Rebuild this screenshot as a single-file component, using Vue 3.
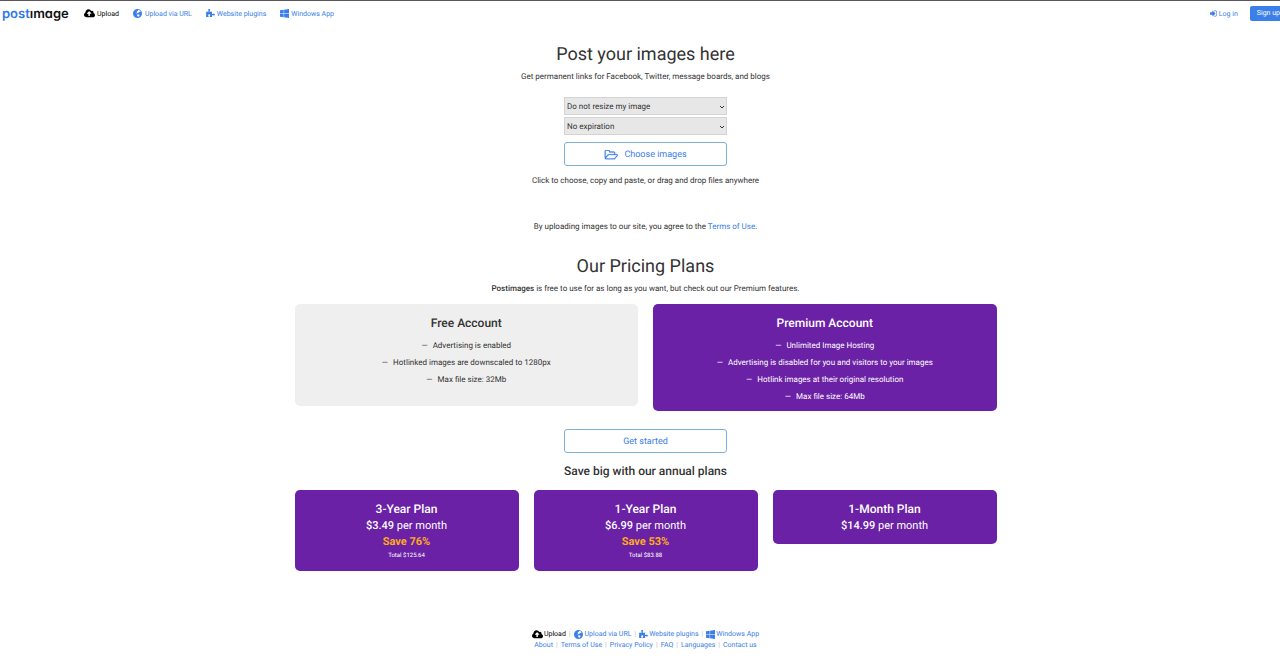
<script setup>
import { ref, h } from 'vue'

const resize = ref('Do not resize my image')
const expiration = ref('No expiration')

const icons = {
  upload: {
    box: '0 256 1920 1344',
    d: 'M1280 928q0-14-9-23l-352-352q-9-9-23-9t-23 9l-351 351q-10 12-10 24 0 14 9 23t23 9h224v352q0 13 9.5 22.5t22.5 9.5h192q13 0 22.5-9.5t9.5-22.5v-352h224q13 0 22.5-9.5t9.5-22.5zm640 288q0 159-112.5 271.5t-271.5 112.5h-1088q-185 0-316.5-131.5t-131.5-316.5q0-130 70-240t188-165q-2-30-2-43 0-212 150-362t362-150q156 0 285.5 87t188.5 231q71-62 166-62 106 0 181 75t75 181q0 76-41 138 130 31 213.5 135.5t83.5 238.5z',
  },
  globe: {
    box: '0 0 18 18',
    d: 'M9 0a9 9 0 1 0 0 18A9 9 0 0 0 9 0zM10 1.500L14 3 15.500 5 13 5.500 12 7 9.500 7.500 8 9 6.500 8.500 8 6.500 7.500 5 9.500 4zM9 10.500L12 11 13.500 12.500 11.500 14.500 10 16 9 14 8 12.500z',
  },
  plugin: {
    box: '64 0 1728 1728',
    d: 'M1755 1082q0 81-44.5 135t-123.5 54q-41 0-77.5-17.5t-59-38-56.5-38-71-17.5q-110 0-110 124 0 39 16 115t15 115v5q-22 0-33 1-34 3-97.5 11.5t-115.5 13.5-98 5q-61 0-103-26.5t-42-83.5q0-37 17.5-71t38-56.5 38-59 17.5-77.500q0-79-54-123.500t-135-44.500q-84 0-143 45.500t-59 127.500q0 43 15 83t33.500 64.500 33.500 53 15 50.500q0 45-46 89-37 35-117 35-95 0-245-24-9-2-27.500-4t-27.500-4l-13-2q-1 0-3-1-2 0-2-1v-1024q2 1 17.500 3.500t34 5 21.500 3.500q150 24 245 24 80 0 117-35 46-44 46-89 0-22-15-50.500t-33.500-53-33.500-64.500-15-83q0-82 59-127.500t144-45.500q80 0 134 44.500t54 123.500q0 41-17.500 77.500t-38 59-38 56.500-17.500 71q0 57 42 83.500t103 26.500q64 0 180-15t163-17v2q-1 2-3.500 17.500t-5 34-3.500 21.500q-24 150-24 245 0 80 35 117 44 46 89 46 22 0 50.500-15t53-33.500 64.500-33.500 83-15q82 0 127.500 59t45.500 143z',
  },
  windows: {
    box: '64 128 1664 1664',
    d: 'M746 1006v651l-682-94v-557zm0-743v659h-682v-565zm982 743v786l-907-125v-661zm0-878v794h-907v-669z',
  },
  login: {
    box: '0 256 1536 1280',
    d: 'M1184 896q0 26-19 45l-544 544q-19 19-45 19t-45-19-19-45v-288H64q-26 0-45-19t-19-45V704q0-26 19-45t45-19h448V352q0-26 19-45t45-19 45 19l544 544q19 19 19 45zM1536 544v704q0 119-84.500 203.500T1248 1536H928q-32 0-32-32v-64q0-32 32-32h320q66 0 113-47t47-113V544q0-66-47-113t-113-47H928q-32 0-32-32v-64q0-32 32-32h320q119 0 203.500 84.500T1536 544z',
  },
  folder: {
    box: '-40 216 2053 1360',
    d: 'M1845 931q0-35-53-35h-1088q-40 0-85.500 21.500t-71.500 52.500l-294 363q-18 24-18 40 0 35 53 35h1088q40 0 86-22t71-53l294-363q18-22 18-39zm-1141-163h768v-160q0-40-28-68t-68-28h-576q-40 0-68-28t-28-68v-64q0-40-28-68t-68-28h-320q-40 0-68 28t-28 68v853l256-315q44-53 116-87.500t140-34.500zm1269 163q0 62-46 120l-295 363q-43 53-116 87.500t-140 34.500h-1088q-92 0-158-66t-66-158v-960q0-92 66-158t158-66h320q92 0 158 66t66 158v32h544q92 0 158 66t66 158v160h192q54 0 99 24.500t67 70.500q15 32 15 68z',
  },
}

const Icon = (props) =>
  h('svg', { viewBox: icons[props.name].box, 'aria-hidden': 'true' }, [
    h('path', { d: icons[props.name].d, fill: 'currentColor', 'fill-rule': 'evenodd' }),
  ])
Icon.props = ['name']

const links = [
  { icon: 'upload', text: 'Upload', active: true },
  { icon: 'globe', text: 'Upload via URL' },
  { icon: 'plugin', text: 'Website plugins' },
  { icon: 'windows', text: 'Windows App' },
]
const more = ['About', 'Terms of Use', 'Privacy Policy', 'FAQ', 'Languages', 'Contact us']

const accounts = [
  {
    title: 'Free Account',
    items: ['Advertising is enabled', 'Hotlinked images are downscaled to 1280px', 'Max file size: 32Mb'],
  },
  {
    title: 'Premium Account',
    premium: true,
    items: [
      'Unlimited Image Hosting',
      'Advertising is disabled for you and visitors to your images',
      'Hotlink images at their original resolution',
      'Max file size: 64Mb',
    ],
  },
]

const plans = [
  { title: '3-Year Plan', price: '$3.49', save: 'Save 76%', total: 'Total $125.64' },
  { title: '1-Year Plan', price: '$6.99', save: 'Save 53%', total: 'Total $83.88' },
  { title: '1-Month Plan', price: '$14.99' },
]
</script>

<template>
  <div class="viewport">
    <div class="page">
      <header class="bar">
        <a class="logo" href="#" aria-label="postimage"><span>post</span>ımage</a>
        <nav class="nav">
          <a v-for="l in links" :key="l.text" href="#" class="nav-link" :class="{ active: l.active }">
            <Icon :name="l.icon" class="icon" :class="l.icon" />{{ l.text }}
          </a>
        </nav>
        <a href="#" class="nav-link login"><Icon name="login" class="icon small" />Log in</a>
        <a href="#" class="signup">Sign up</a>
      </header>

      <main class="main">
        <h1>Post your images here</h1>
        <p>Get permanent links for Facebook, Twitter, message boards, and blogs</p>

        <form class="form" @submit.prevent>
          <div class="select">
            <select v-model="resize" aria-label="Resize">
              <option>Do not resize my image</option>
            </select>
            <svg viewBox="0 0 6 4" aria-hidden="true"><path d="M1 1l2 2 2-2" /></svg>
          </div>
          <div class="select">
            <select v-model="expiration" aria-label="Expiration">
              <option>No expiration</option>
            </select>
            <svg viewBox="0 0 6 4" aria-hidden="true"><path d="M1 1l2 2 2-2" /></svg>
          </div>
          <button type="button" class="btn choose"><Icon name="folder" class="folder" />Choose images</button>
        </form>

        <p class="hint">Click to choose, copy and paste, or drag and drop files anywhere</p>
        <p class="terms">By uploading images to our site, you agree to the <a href="#">Terms of Use</a>.</p>

        <h2>Our Pricing Plans</h2>
        <p><strong>Postimages</strong> is free to use for as long as you want, but check out our Premium features.</p>

        <div class="accounts">
          <section v-for="a in accounts" :key="a.title" class="card account" :class="{ premium: a.premium }">
            <h3>{{ a.title }}</h3>
            <ul>
              <li v-for="i in a.items" :key="i">{{ i }}</li>
            </ul>
          </section>
        </div>

        <button type="button" class="btn">Get started</button>

        <h3 class="save-big">Save big with our annual plans</h3>
        <div class="plans">
          <section v-for="p in plans" :key="p.title" class="card premium">
            <h3>{{ p.title }}</h3>
            <div class="price"><strong>{{ p.price }}</strong> per month</div>
            <div v-if="p.save" class="save">{{ p.save }}</div>
            <div v-if="p.total" class="total">{{ p.total }}</div>
          </section>
        </div>
      </main>

      <footer class="footer">
        <div class="row">
          <template v-for="(l, i) in links" :key="l.text">
            <span v-if="i" class="sep">|</span>
            <a href="#" class="nav-link" :class="{ active: l.active }">
              <Icon :name="l.icon" class="icon" :class="l.icon" />{{ l.text }}
            </a>
          </template>
        </div>
        <div class="row">
          <template v-for="(m, i) in more" :key="m">
            <span v-if="i" class="sep">|</span>
            <a href="#">{{ m }}</a>
          </template>
        </div>
      </footer>
    </div>
  </div>
</template>

<style>
body {
  background: #fff;
}
</style>

<style scoped>
* {
  box-sizing: border-box;
}
.viewport {
  overflow: hidden;
  border-top: 1px solid #5a5659;
  font: 8px/12px Roboto, 'Liberation Sans', sans-serif;
  text-rendering: geometricPrecision;
  color: #333;
}
.page {
  width: calc(100% + 11px);
}
a {
  color: #3a80e8;
  text-decoration: none;
}
h1, h2, h3, p, ul {
  margin: 0;
}
.bar {
  display: flex;
  align-items: center;
  height: 25px;
  padding: 0 4px 0 2px;
  font-size: 7px;
}
.logo {
  width: 82px;
  font: 600 13px/20px Inter, sans-serif;
  font-feature-settings: 'cv11';
  color: #111;
}
.logo span {
  color: #2f7ae8;
}
.nav {
  display: flex;
  gap: 14px;
  margin-right: auto;
}
.nav-link {
  display: flex;
  align-items: center;
  gap: 2px;
  white-space: nowrap;
}
a.active {
  color: #000;
}
.icon {
  width: 9px;
  height: 9px;
}
.icon.upload {
  width: 11px;
}
.icon.globe {
  margin-right: 1px;
}
.icon.small {
  width: 7px;
  height: 7px;
}
a.signup {
  margin-left: 12px;
  padding: 0 7px;
  border-radius: 2px;
  background: #3a80e8;
  color: #fff;
  line-height: 15px;
  white-space: nowrap;
}
.main {
  max-width: 702px;
  margin: 0 auto;
  text-align: center;
}
h1, h2 {
  font-size: 18px;
  line-height: 24px;
  font-weight: 400;
}
h1 {
  margin: 17px 0 4px;
}
h2 {
  margin: 22px 0 4px;
}
.form {
  display: flex;
  flex-direction: column;
  gap: 2px;
  width: 163px;
  margin: 14px auto 9px;
}
.select {
  position: relative;
}
select {
  display: block;
  width: 100%;
  height: 18px;
  padding: 1px 2px 0;
  border: 1px solid #d4d4d4;
  border-radius: 0;
  background: #e7e7e7;
  color: #333;
  font: inherit;
  text-rendering: inherit;
  appearance: none;
}
.select svg {
  position: absolute;
  right: 2px;
  top: 8px;
  width: 6px;
  height: 4px;
  fill: none;
  stroke: #333;
}
.btn {
  display: flex;
  align-items: center;
  justify-content: center;
  gap: 6px;
  width: 163px;
  height: 24px;
  margin: 0 auto;
  padding: 1px 0 0;
  border: 1px solid #7fb0dd;
  border-radius: 3px;
  background: #fff;
  color: #3a80e8;
  font: 9px/12px Roboto, sans-serif;
  text-rendering: inherit;
}
.choose {
  margin-top: 5px;
}
.folder {
  width: 14px;
  height: 10px;
  stroke: currentColor;
  stroke-width: 40;
}
.terms {
  margin-top: 34px;
}
strong {
  font-weight: 500;
}
.accounts {
  display: grid;
  grid-template-columns: 1fr 1fr;
  gap: 15px;
  align-items: start;
  margin: 9px 0 18px;
}
.card {
  padding: 11px 8px 10px;
  border-radius: 5px;
  background: #efefef;
}
.card.account {
  padding-bottom: 18px;
}
.card.premium {
  background: #6a21a5;
  color: #fff;
}
.account.premium {
  padding-bottom: 6px;
}
h3 {
  font-size: 12px;
  line-height: 16px;
  font-weight: 500;
}
ul {
  padding: 0;
  margin-top: 6px;
  list-style: none;
}
li {
  line-height: 17px;
}
li::before {
  content: '—';
  margin-right: 5px;
}
.save-big {
  margin: 10px 0 11px;
}
.plans {
  display: grid;
  grid-template-columns: repeat(3, 1fr);
  gap: 15px;
  align-items: start;
}
.price, .save {
  font-size: 11px;
  line-height: 16px;
}
.price {
  margin-top: 1px;
}
.save {
  color: #ffab1a;
  font-weight: 700;
}
.total {
  font-size: 6px;
  line-height: 11px;
}
.footer {
  margin-top: 58px;
  padding-bottom: 8px;
  font-size: 7px;
  line-height: 11px;
}
.row {
  display: flex;
  justify-content: center;
  gap: 3px;
}
.footer .nav-link {
  gap: 1px;
}
.sep {
  color: #bbb;
}
</style>
